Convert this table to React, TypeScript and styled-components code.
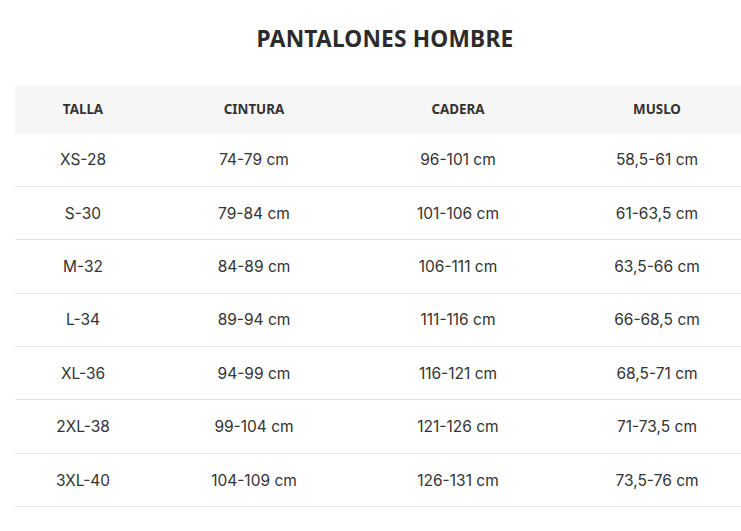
import React from "react";
import styled, { createGlobalStyle } from "styled-components";

const Global = createGlobalStyle`
  html, body { margin: 0; padding: 0; background: #fff; overflow: hidden; }
  body { font-family: "Inter", "Noto Sans", "Liberation Sans", sans-serif; color: #333; }
`;

const Page = styled.div`
  width: 740px;
  margin-left: 15px;
  padding-top: 22px;
`;

const Title = styled.h2`
  margin: 0 0 29px;
  text-align: center;
  font-family: "Noto Sans", "Liberation Sans", sans-serif;
  font-size: 22.7px;
  line-height: 34px;
  font-weight: 700;
  color: #2b2b2b;
  letter-spacing: 0.2px;
`;

const Table = styled.table`
  width: 740px;
  border-collapse: collapse;
  table-layout: fixed;
`;

const HeadCell = styled.th<{ $w: number }>`
  width: ${(p) => p.$w}px;
  height: 48.5px;
  padding: 0;
  background: #f6f6f6;
  font-family: "Noto Sans", "Liberation Sans", sans-serif;
  font-size: 13.4px;
  font-weight: 700;
  color: #333;
  text-align: center;
  vertical-align: middle;
`;

const Row = styled.tr`
  border-bottom: 1px solid #e4e4e4;
`;

const Cell = styled.td`
  height: 52.4px;
  padding: 0;
  font-size: 15.5px;
  color: #333;
  text-align: center;
  vertical-align: middle;
`;

const cols = [
  { label: "TALLA", w: 136 },
  { label: "CINTURA", w: 206 },
  { label: "CADERA", w: 202 },
  { label: "MUSLO", w: 196 },
];

const rows = [
  ["XS-28", "74-79 cm", "96-101 cm", "58,5-61 cm"],
  ["S-30", "79-84 cm", "101-106 cm", "61-63,5 cm"],
  ["M-32", "84-89 cm", "106-111 cm", "63,5-66 cm"],
  ["L-34", "89-94 cm", "111-116 cm", "66-68,5 cm"],
  ["XL-36", "94-99 cm", "116-121 cm", "68,5-71 cm"],
  ["2XL-38", "99-104 cm", "121-126 cm", "71-73,5 cm"],
  ["3XL-40", "104-109 cm", "126-131 cm", "73,5-76 cm"],
];

export default function App() {
  return (
    <>
      <Global />
      <Page>
        <Title>PANTALONES HOMBRE</Title>
        <Table>
          <thead>
            <tr>
              {cols.map((c) => (
                <HeadCell key={c.label} $w={c.w}>
                  {c.label}
                </HeadCell>
              ))}
            </tr>
          </thead>
          <tbody>
            {rows.map((r) => (
              <Row key={r[0]}>
                {r.map((v, i) => (
                  <Cell key={i}>{v}</Cell>
                ))}
              </Row>
            ))}
          </tbody>
        </Table>
      </Page>
    </>
  );
}
